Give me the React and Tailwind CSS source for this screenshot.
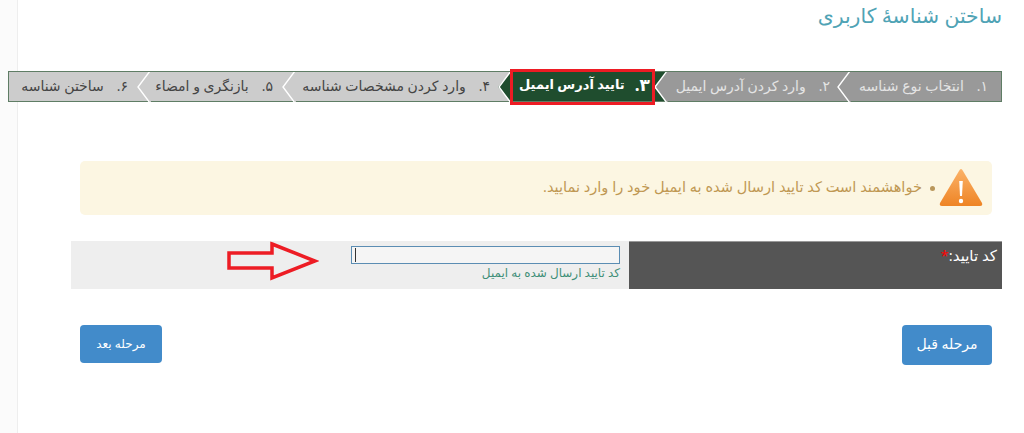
const steps = [
  { n: "۱.", t: "انتخاب نوع شناسه", w: "w-[151px] pr-[13px] text-[14px]", bg: "bg-[#999999]", fg: "text-[#e4e4e4]", ar: "#999999" },
  { n: "۲.", t: "وارد کردن آدرس ایمیل", w: "w-[183px] pr-[20px] text-[14px]", bg: "bg-[#999999]", fg: "text-[#e4e4e4]", ar: "#999999" },
  { n: "۳.", t: "تایید آدرس ایمیل", w: "w-[156px] pr-[17px] text-[13px]", bg: "bg-[#1f4d2e]", fg: "text-white font-bold", ar: "#1f4d2e", big: true },
  { n: "۴.", t: "وارد کردن مشخصات شناسه", w: "w-[216px] pr-[21px] text-[14px]", bg: "bg-[#cccccc]", fg: "text-[#444444]", ar: "#cccccc" },
  { n: "۵.", t: "بازنگری و امضاء", w: "w-[145px] pr-[22px] text-[14px]", bg: "bg-[#cccccc]", fg: "text-[#444444]", ar: "#cccccc" },
  { n: "۶.", t: "ساختن شناسه", w: "flex-1 pr-[22px] text-[14px]", bg: "bg-[#cccccc]", fg: "text-[#444444]", ar: null },
];

function Step({ s, i }) {
  return (
    <div className={`relative flex items-center h-full pb-[3px] whitespace-nowrap ${s.w} ${s.bg} ${s.fg}`}>
      <span className={s.big ? "ml-[10px] text-[17px]" : "ml-[13px]"}>{s.n}</span>
      <span>{s.t}</span>
      {s.ar && (
        <svg className="absolute top-0 right-full z-10 -mr-px" width="14" height="30" viewBox="0 0 14 30">
          <path d="M13 0 L0 15 L13 30 L14 30 L14 0 Z" fill={s.ar} />
          <path d="M13 -1 L1 15 L13 31" fill="none" stroke="#ffffff" strokeWidth="1.4" />
        </svg>
      )}
      {i === 2 && (
        <div className="absolute -top-[3px] -bottom-[4px] right-[12px] -left-[1px] border-[3px] border-[#ed1c24] z-20 pointer-events-none" />
      )}
    </div>
  );
}

export default function App() {
  return (
    <div dir="rtl" className="relative w-[1024px] h-[433px] overflow-hidden bg-white" style={{ fontFamily: '"Open Sans", "DejaVu Sans", sans-serif' }}>
      <div className="absolute left-0 top-0 bottom-0 w-[18px] bg-[#fbfbfb] border-r border-[#eeeeee]" />
      <div className="relative pr-[22px] pl-[8px]">
        <h1 className="h-[71px] pt-[2px] text-[20.4px] leading-[26px] font-normal text-[#4fa3b5]">ساختن شناسهٔ کاربری</h1>

        <div className="flex h-[31px] border border-[#5f7d65] bg-[#cccccc]">
          {steps.map((s, i) => <Step key={i} s={s} i={i} />)}
        </div>

        <div className="mr-[10px] ml-[72px] mt-[59px] h-[54px] flex items-center rounded-[5px] bg-[#fcf6e2] pr-[9px]">
          <svg width="44" height="40" viewBox="0 0 44 40" className="shrink-0">
            <defs>
              <linearGradient id="w" x1="0" y1="0" x2="0" y2="1">
                <stop offset="0" stopColor="#fbb268" />
                <stop offset="1" stopColor="#ee8425" />
              </linearGradient>
            </defs>
            <path d="M22 1 Q23 1 24 3 L43 35 Q44 38 41 38 L3 38 Q0 38 1 35 L20 3 Q21 1 22 1 Z" fill="url(#w)" />
            <path d="M20.2 13 L23.8 13 L23 28 L21 28 Z" fill="#ffffff" />
            <circle cx="22" cy="33" r="2.2" fill="#ffffff" />
          </svg>
          <span className="mr-[4px] ml-[8px] w-[5px] h-[5px] rounded-full bg-[#b9975b]" />
          <span className="pb-[2px] text-[14.6px] text-[#c09853]">خواهشمند است کد تایید ارسال شده به ایمیل خود را وارد نمایید.</span>
        </div>

        <div className="mt-[26px] ml-[63px] flex h-[48px]">
          <div className="w-[373px] bg-[#555555] border-t border-[#999999] pr-[5px] pt-[3px] text-[15px] leading-[20px] text-white">
            کد تایید:<span className="text-[#ff0000]">*</span>
          </div>
          <div className="relative flex-1 bg-[#eeeeee] pr-[9px] pt-[5px]">
            <div dir="ltr" className="w-[269px] h-[18px] border border-[#5b8db3] bg-[#f5f5f5] pl-[3px] py-[1px]">
              <div className="w-px h-full bg-[#333333]" />
            </div>
            <div className="mt-[1px] text-[12px] leading-[16px] text-[#3f8f78]">کد تایید ارسال شده به ایمیل</div>
            <svg className="absolute left-[156px] top-0" width="92" height="40" viewBox="0 0 92 40">
              <path d="M45 3 L88 20 L45 37 L45 27 L2 27 L2 12 L45 12 Z" fill="none" stroke="#ed1c24" strokeWidth="3.5" />
            </svg>
          </div>
        </div>

        <div className="mt-[36px] mr-[10px] ml-[72px] flex justify-between items-start">
          <button className="w-[90px] h-[40px] pb-[3px] rounded-[4px] bg-[#428bca] text-white text-[14px]">مرحله قبل</button>
          <button className="w-[82px] h-[38px] rounded-[4px] bg-[#428bca] text-white text-[12px]">مرحله بعد</button>
        </div>
      </div>
    </div>
  );
}
